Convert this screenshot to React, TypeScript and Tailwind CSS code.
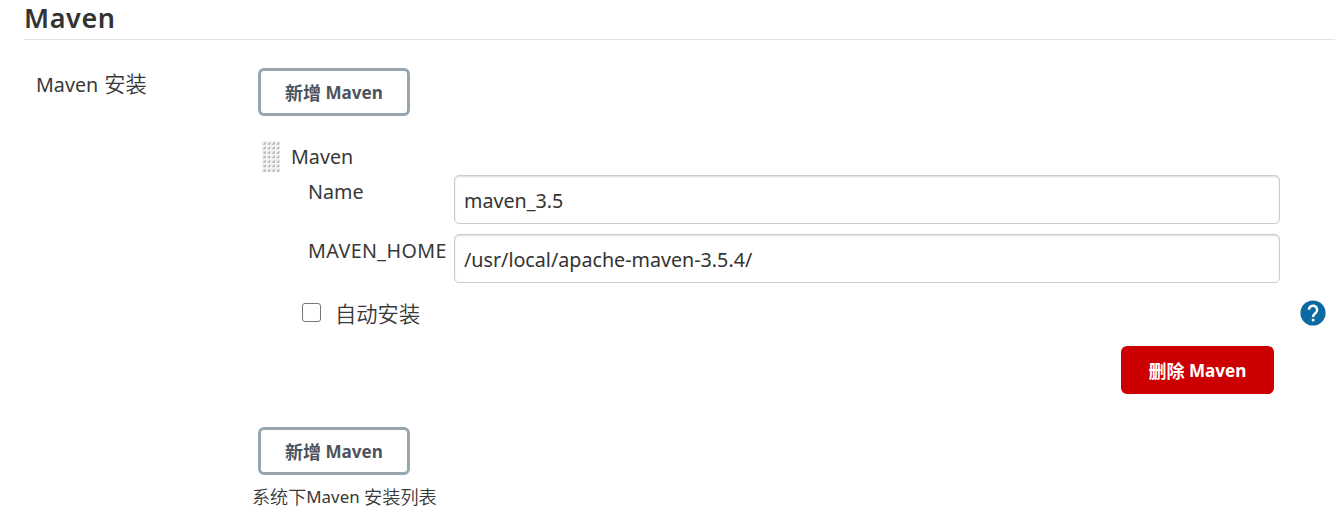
import React from "react";

function AddButton() {
  return (
    <button className="flex h-12 w-[152px] items-center justify-center whitespace-pre rounded-md border-3 border-[#98a6af] bg-white pt-px text-[17.1px] font-bold leading-none text-[#4d545d]">
      <span className="text-[18px]">新增</span>
      <span> Maven</span>
    </button>
  );
}

function Field({ label, value, labelClass = "" }: { label: string; value: string; labelClass?: string }) {
  return (
    <div className="flex h-[49px]">
      <label className={`w-[146px] shrink-0 pt-[3px] leading-7 ${labelClass}`}>{label}</label>
      <input
        className="h-[49px] w-[826px] rounded-[5px] border border-[#cccccc] bg-white px-[9px] pt-px text-[#333] shadow-[inset_0_1px_2px_rgba(0,0,0,0.14)] outline-none"
        defaultValue={value}
      />
    </div>
  );
}

function DragHandle() {
  const cells = Array.from({ length: 28 }, (_, i) => ({
    x: (i % 4) * 4.5,
    y: Math.floor(i / 4) * 4.5,
  }));
  return (
    <svg width="18" height="32" viewBox="0 0 18 32" className="shrink-0">
      {cells.map(({ x, y }) => (
        <g key={`${x}-${y}`}>
          <rect x={x} y={y} width="3.8" height="3.8" fill="#f0f0ee" />
          <path d={`M${x + 3.8} ${y + 0.6}v3.2h-3.2z`} fill="#b4b3ae" />
        </g>
      ))}
    </svg>
  );
}

export default function App() {
  return (
    <main className="h-[525px] w-[1335px] overflow-hidden bg-white font-['Noto_Sans','Noto_Sans_CJK_SC',sans-serif] text-[19.7px] text-[#383838]">
      <h2 className="ml-6 h-10 border-b border-[#dee2e0] text-[27px] font-semibold leading-[36px] tracking-[0.6px] text-[#333]">
        Maven
      </h2>
      <div className="flex">
        <div className="w-[252px] shrink-0 whitespace-pre pl-9 pt-[30px] leading-7">
          Maven <span className="pl-px text-[21.3px] font-[350]">安装</span>
        </div>
        <div className="flex w-[1083px] flex-col">
          <div className="pl-1.5 pt-7">
            <AddButton />
          </div>
          <div className="mt-[25px] flex h-[34px] pl-2.5">
            <DragHandle />
            <span className="pl-[11px] pt-0.5 leading-7">Maven</span>
          </div>
          <div className="flex flex-col gap-2.5 pl-14">
            <Field label="Name" value="maven_3.5" />
            <Field label="MAVEN_HOME" value="/usr/local/apache-maven-3.5.4/" labelClass="tracking-[0.4px]" />
          </div>
          <div className="mt-[15px] flex h-[30px] items-center pl-[50px] pr-[9px]">
            <input
              type="checkbox"
              className="mb-px h-[19px] w-[19px] appearance-none rounded-[3px] border border-[#767676] bg-white"
            />
            <span className="pl-[14px] pt-px text-[21.3px] font-[350] leading-7">自动安装</span>
            <svg className="ml-auto" width="26" height="26" viewBox="0 0 24 24">
              <circle cx="12" cy="12" r="11.6" fill="#0b6aa2" />
              <path
                d="M8.2 9a3.8 3.8 0 1 1 6.5 2.7c-1.4 1.4-2.6 1.8-2.6 3.9"
                fill="none"
                stroke="#fff"
                strokeWidth="2.3"
              />
              <rect x="10.9" y="17.3" width="2.4" height="2.4" fill="#fff" />
            </svg>
          </div>
          <div className="mt-[18px] flex justify-end pr-[61px]">
            <button className="flex h-12 w-[153px] items-center justify-center whitespace-pre rounded-md bg-[#cc0003] pt-px text-[17.1px] font-bold leading-none text-white">
              <span className="text-[18px]">删除</span>
              <span> Maven</span>
            </button>
          </div>
          <div className="pl-1.5 pt-[33px]">
            <AddButton />
          </div>
          <div className="mt-2 flex h-7 items-center whitespace-pre text-[16.9px] leading-7">
            <span className="text-[18.1px] font-[350]">系统下</span>Maven{" "}
            <span className="text-[18.2px] font-[350]">安装列表</span>
          </div>
        </div>
      </div>
    </main>
  );
}
